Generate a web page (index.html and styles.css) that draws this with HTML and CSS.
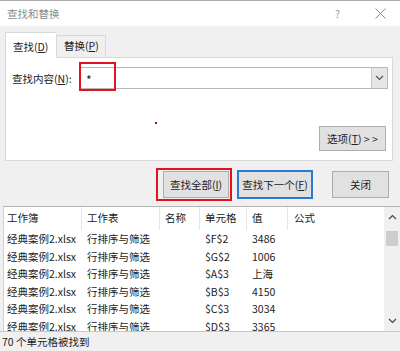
FILE: index.html
```html
<!DOCTYPE html>
<html lang="zh-CN">
<head>
    <meta charset="UTF-8">
    <title>查找和替换</title>
    <link rel="stylesheet" href="styles.css">
</head>
<body>
    <div class="window">
        <div class="titlebar">
            <span class="title">查找和替换</span>
            <span class="help">?</span>
            <span class="close-x">
                <svg width="11" height="11" viewBox="0 0 11 11"><path d="M0.5 0.5 L10.5 10.5 M10.5 0.5 L0.5 10.5" stroke="#8a8a8a" stroke-width="1" fill="none"/></svg>
            </span>
        </div>

        <div class="dialog">
            <div class="tabs">
                <div class="tab active">查找(<u>D</u>)</div>
                <div class="tab">替换(<u>P</u>)</div>
            </div>

            <div class="panel">
                <div class="find-row">
                    <label class="find-label">查找内容(<u>N</u>):</label>
                    <div class="combo">
                        <span class="combo-text">*</span>
                        <span class="combo-btn">
                            <svg width="9" height="6" viewBox="0 0 9 6"><path d="M1 1 L4.5 4.5 L8 1" stroke="#555" stroke-width="1.2" fill="none"/></svg>
                        </span>
                        <span class="mark mark-input"></span>
                    </div>
                </div>
                <span class="dot"></span>
                <div class="options-row">
                    <button class="btn btn-options">选项(<u>T</u>) &gt; &gt;</button>
                </div>
            </div>

            <div class="actions">
                <button class="btn btn-all">查找全部(<u>I</u>)<span class="mark mark-btn"></span></button>
                <button class="btn btn-next">查找下一个(<u>F</u>)</button>
                <button class="btn btn-close">关闭</button>
            </div>
        </div>

        <div class="results">
            <div class="grid">
                <div class="head first">工作簿</div>
                <div class="head">工作表</div>
                <div class="head">名称</div>
                <div class="head">单元格</div>
                <div class="head">值</div>
                <div class="head last">公式</div>

                <div class="first">经典案例2.xlsx</div><div>行排序与筛选</div><div></div><div>$F$2</div><div>3486</div><div></div>
                <div class="first">经典案例2.xlsx</div><div>行排序与筛选</div><div></div><div>$G$2</div><div>1006</div><div></div>
                <div class="first">经典案例2.xlsx</div><div>行排序与筛选</div><div></div><div>$A$3</div><div>上海</div><div></div>
                <div class="first">经典案例2.xlsx</div><div>行排序与筛选</div><div></div><div>$B$3</div><div>4150</div><div></div>
                <div class="first">经典案例2.xlsx</div><div>行排序与筛选</div><div></div><div>$C$3</div><div>3034</div><div></div>
                <div class="first">经典案例2.xlsx</div><div>行排序与筛选</div><div></div><div>$D$3</div><div>3365</div><div></div>
            </div>
            <div class="scrollbar">
                <svg class="arrow" width="9" height="6" viewBox="0 0 9 6"><path d="M1 5 L4.5 1.5 L8 5" stroke="#444" stroke-width="1.2" fill="none"/></svg>
                <div class="thumb"></div>
                <div class="track"></div>
                <svg class="arrow" width="9" height="6" viewBox="0 0 9 6"><path d="M1 1 L4.5 4.5 L8 1" stroke="#444" stroke-width="1.2" fill="none"/></svg>
            </div>
        </div>

        <div class="status">70 个单元格被找到</div>
    </div>
</body>
</html>
```

FILE: styles.css
```css
body {
    margin: 0;
    font-family: "Noto Sans CJK SC", "Noto Sans", sans-serif;
    font-size: 10.5px;
    color: #222;
    background: #fff;
}
u {
    text-decoration: underline;
    text-underline-offset: 1px;
}
.window {
    width: 400px;
    height: 351px;
    overflow: hidden;
    display: flex;
    flex-direction: column;
    background: #f0f0f0;
}
.titlebar {
    height: 26px;
    border-top: 1px solid #a9a9a9;
    background: #fff;
    display: flex;
    align-items: center;
    padding-left: 7px;
    color: #8c8c8c;
}
.title {
    flex: 1;
}
.help {
    width: 12px;
    margin-right: 28px;
    color: #999;
}
.close-x {
    display: flex;
    margin-right: 14px;
}
.dialog {
    padding: 6px 7px 0 5px;
}
.tabs {
    display: flex;
    align-items: flex-end;
    height: 25px;
}
.tab {
    height: 21px;
    line-height: 20px;
    padding: 0 6px 0 7px;
    border: 1px solid #d9d9d9;
    border-bottom: none;
    background: #f0f0f0;
    white-space: nowrap;
}
.tab.active {
    height: 25px;
    line-height: 28px;
    padding: 0 7px 0 7px;
    width: 36px;
    background: #fff;
    border-right: none;
    position: relative;
    z-index: 1;
    margin-bottom: -1px;
}
.panel {
    position: relative;
    border: 1px solid #d9d9d9;
    background: #fff;
    padding: 9px 6px 0 6px;
    box-sizing: border-box;
    height: 104px;
    display: flex;
    flex-direction: column;
}
.find-row {
    display: flex;
    align-items: center;
}
.find-label {
    width: 68px;
    white-space: nowrap;
}
.combo {
    position: relative;
    flex: 1;
    height: 22px;
    margin-right: -2px;
    border: 1px solid #b9b9b9;
    box-sizing: border-box;
    display: flex;
    align-items: center;
}
.combo-text {
    flex: 1;
    padding-left: 5px;
    font-size: 12px;
    line-height: 12px;
    padding-top: 3px;
}
.combo-btn {
    width: 15px;
    height: 20px;
    background: #e6e6e6;
    border-left: 1px solid #c9c9c9;
    display: flex;
    align-items: center;
    justify-content: center;
}
.mark {
    position: absolute;
    border: 2px solid #e0141e;
    box-sizing: border-box;
    pointer-events: none;
}
.mark-input {
    left: -2px;
    top: -6px;
    width: 37px;
    height: 29px;
}
.dot {
    position: absolute;
    left: 149px;
    top: 64px;
    width: 2px;
    height: 2px;
    background: #a0102a;
}
.options-row {
    display: flex;
    justify-content: flex-end;
    margin-top: 37px;
}
.btn {
    font-family: inherit;
    font-size: 10.5px;
    color: #222;
    background: #e1e1e1;
    border: 1px solid #adadad;
    padding: 0;
    height: 27px;
    position: relative;
    white-space: nowrap;
}
.btn-options {
    width: 67px;
    height: 25px;
}
.actions {
    display: flex;
    justify-content: flex-end;
    align-items: center;
    padding: 9px 4px 0 0;
}
.btn-all {
    width: 66px;
}
.mark-btn {
    left: -8px;
    top: -4px;
    right: -4px;
    bottom: -4px;
}
.btn-next {
    width: 76px;
    margin-left: 8px;
    border: 2px solid #2a7ad5;
    height: 29px;
}
.btn-close {
    width: 57px;
    margin-left: 19px;
}
.results {
    margin-top: 7px;
    margin-left: 3px;
    height: 127px;
    border-top: 1px solid #b5b5b5;
    border-left: 1px solid #d0d0d0;
    box-sizing: border-box;
    background: #fff;
    display: flex;
    overflow: hidden;
}
.grid {
    flex: 1;
    display: grid;
    grid-template-columns: 78px 78px 40px 47px 41px 1fr;
    grid-template-rows: 23px;
    grid-auto-rows: 17.5px;
    align-content: start;
    line-height: 17.5px;
}
.grid > div {
    padding-left: 5px;
    white-space: nowrap;
    overflow: hidden;
}
.grid > .first {
    padding-left: 3px;
}
.grid > .head {
    line-height: 22px;
    border-right: 1px solid #e5e5e5;
}
.grid > .head.last {
    border-right: none;
    padding-left: 6px;
}
.scrollbar {
    width: 16px;
    background: #f0f0f0;
    display: flex;
    flex-direction: column;
    align-items: center;
}
.scrollbar .arrow {
    margin: 7px 0;
}
.thumb {
    width: 12px;
    height: 15px;
    background: #cdcdcd;
    margin-top: 4px;
}
.track {
    flex: 1;
}
.status {
    height: 19px;
    border-top: 1px solid #c8c8c8;
    line-height: 19px;
    padding-left: 2px;
    background: #f0f0f0;
}
```
